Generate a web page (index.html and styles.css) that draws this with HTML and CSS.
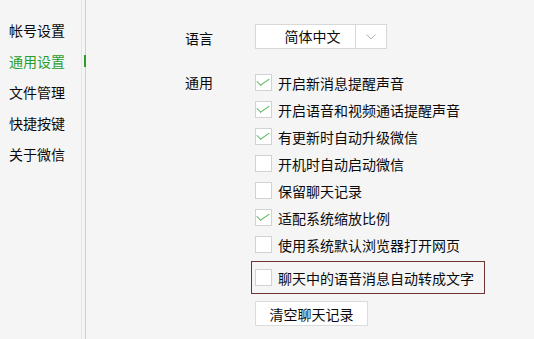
FILE: index.html
```html
<!DOCTYPE html>
<html>
<head>
    <title>设置</title>
    <meta charset="utf-8">
    <meta name="viewport" content="width=device-width, initial-scale=1.0">
    <link rel="stylesheet" href="styles.css">
</head>
<body>
    <div id="container">
        <ul class="nav">
            <li class="nav-item">帐号设置</li>
            <li class="nav-item active">通用设置</li>
            <li class="nav-item">文件管理</li>
            <li class="nav-item">快捷按键</li>
            <li class="nav-item">关于微信</li>
        </ul>
        <div class="rail"></div>
        <div class="settings">
            <div class="label lang-label">语言</div>
            <div class="select">
                <span class="select-value">简体中文</span>
                <span class="select-arrow">
                    <svg width="10" height="6" viewBox="0 0 10 6"><path d="M 0.5 0.5 L 5 5 L 9.5 0.5" fill="none" stroke="#b5b5b5" stroke-width="1"/></svg>
                </span>
            </div>

            <div class="label general-label">通用</div>
            <div class="options">
                <label class="option"><span class="box checked"></span>开启新消息提醒声音</label>
                <label class="option"><span class="box checked"></span>开启语音和视频通话提醒声音</label>
                <label class="option"><span class="box checked"></span>有更新时自动升级微信</label>
                <label class="option"><span class="box"></span>开机时自动启动微信</label>
                <label class="option"><span class="box"></span>保留聊天记录</label>
                <label class="option"><span class="box checked"></span>适配系统缩放比例</label>
                <label class="option"><span class="box"></span>使用系统默认浏览器打开网页</label>
                <label class="option highlight"><span class="box"></span>聊天中的语音消息自动转成文字</label>
                <button class="btn">清空聊天记录</button>
            </div>
        </div>
    </div>
</body>
</html>
```

FILE: styles.css
```css
:root {
    --bg-color: #f5f5f5;
    --text-color: #0a0a0a;
    --green: #2a9e2a;
    --border: #d8d8d8;
}

html, body {
    margin: 0;
    padding: 0;
    overflow: hidden;
    background: var(--bg-color);
    font-family: "Noto Sans CJK SC", "Noto Sans", sans-serif;
    font-size: 14px;
    color: var(--text-color);
    cursor: default;
    user-select: none;
}

#container {
    display: flex;
    height: 339px;
}

/* left navigation */

.nav {
    list-style: none;
    margin: 0;
    padding: 15px 0 0 9px;
    width: 72px;
    border-right: 1px solid #e6e6e6;
}

.nav-item {
    height: 31px;
    line-height: 31px;
    white-space: nowrap;
}

.nav-item.active {
    color: var(--green);
    position: relative;
}

.nav-item.active::after {
    content: "";
    position: absolute;
    left: 75px;
    top: 9px;
    width: 2px;
    height: 12px;
    background: var(--green);
}

.rail {
    margin-left: 3px;
    width: 1px;
    background: #cfcfcf;
}

/* settings panel */

.settings {
    display: grid;
    grid-template-columns: 70px auto;
    align-content: start;
    padding: 24px 0 0 99px;
    row-gap: 17px;
}

.label {
    line-height: 27px;
}

.lang-label {
    line-height: 28px;
}

.select {
    display: flex;
    width: 130px;
    height: 23px;
    background: #fff;
    border: 1px solid var(--border);
}

.select-value {
    flex: 1;
    line-height: 23px;
    padding-left: 14px;
    text-align: center;
}

.select-arrow {
    width: 30px;
    border-left: 1px solid var(--border);
    display: flex;
    align-items: center;
    justify-content: center;
}

.options {
    display: flex;
    flex-direction: column;
    align-items: flex-start;
}

.option {
    display: flex;
    align-items: center;
    height: 27px;
    white-space: nowrap;
}

.box {
    width: 15px;
    height: 15px;
    margin-right: 6px;
    background: #fff;
    border: 1px solid #d2d2d2;
    position: relative;
}

.box.checked::after {
    content: "";
    position: absolute;
    left: 4px;
    top: 0;
    width: 5px;
    height: 10px;
    border-right: 1px solid #5cb85c;
    border-bottom: 1px solid #5cb85c;
    transform: rotate(45deg) skewX(-10deg);
}

.option.highlight {
    margin: 3px 0 0 -4px;
    padding-left: 3px;
    width: 229px;
    height: 31px;
    border: 1px solid #6e3434;
}

.btn {
    margin-top: 7px;
    width: 113px;
    height: 25px;
    padding: 0;
    background: #fff;
    border: 1px solid #dcdcdc;
    font-family: inherit;
    font-size: 14px;
    color: var(--text-color);
}
```
